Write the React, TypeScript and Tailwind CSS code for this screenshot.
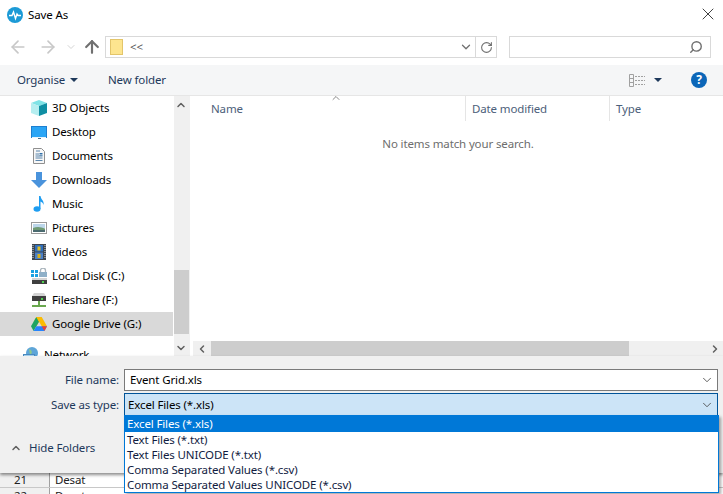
import type { ReactNode } from "react";
import { ArrowLeft, ArrowRight, ArrowUp, ChevronDown, ChevronLeft, ChevronRight, ChevronUp, RotateCw, Search, X } from "lucide-react";

const Cube = () => (
  <svg width="16" height="16" viewBox="0 0 16 16">
    <path d="M8 0 L16 3 L8 6 L0 3 Z" fill="#7fe3e6" />
    <path d="M0 3 L8 6 V16 L0 13 Z" fill="#b5eef0" />
    <path d="M16 3 L8 6 V16 L16 13 Z" fill="#0f8fa3" />
  </svg>
);

const Monitor = () => (
  <svg width="16" height="13" viewBox="0 0 16 13">
    <rect x="0" y="0" width="16" height="12" fill="#1d7fd0" />
    <rect x="1" y="1" width="14" height="10" fill="#2aa5f5" />
    <rect x="1" y="11" width="14" height="1" fill="#e8f4fc" />
    <rect x="7" y="12" width="3" height="1" fill="#4a6f8a" />
  </svg>
);

const DocIcon = () => (
  <svg width="12" height="16" viewBox="0 0 12 16">
    <path d="M.5.5 H8.5 L11.5 3.5 V15.5 H.5 Z" fill="#f7f7f7" stroke="#8f8f8f" />
    <path d="M3 3 H7 M2.5 6 H6 M2.5 8 H9.5 M2.5 10 H9.5 M2.5 12.5 H9.5" stroke="#5a86ad" strokeWidth="1" />
    <path d="M6.5 5.5 H9.5 M6.5 7 H9.5" stroke="#2f6fa8" />
  </svg>
);

const DownArrow = () => (
  <svg width="16" height="16" viewBox="0 0 16 16">
    <path d="M5 0 H11 V8 H16 L8 16 L0 8 H5 Z" fill="#4a93dc" />
  </svg>
);

const Note = () => (
  <svg width="12" height="16" viewBox="0 0 12 16">
    <ellipse cx="4" cy="13" rx="3.5" ry="2.7" fill="#1e9df1" />
    <path d="M6 0 H7.5 C8 4 11.5 4.5 10.5 9 C10 6.5 8.5 6 7.5 5.5 V13 H6 Z" fill="#1e9df1" />
  </svg>
);

const PictureIcon = () => (
  <svg width="16" height="12" viewBox="0 0 16 12">
    <rect x=".5" y=".5" width="15" height="11" fill="#fff" stroke="#9a9a9a" />
    <rect x="2" y="2" width="12" height="4" fill="#bcd6ea" />
    <path d="M2 6 C6 4.5 10 5 14 6.5 V8 H2 Z" fill="#6f9a74" />
    <rect x="2" y="8" width="12" height="2" fill="#4a6a6f" />
  </svg>
);

const Film = () => (
  <svg width="14" height="16" viewBox="0 0 14 16">
    <rect width="14" height="16" fill="#3d4650" />
    <rect x="3" y="1" width="8" height="6.5" fill="#2f6fc0" />
    <rect x="3" y="8.5" width="8" height="6.5" fill="#4a80c8" />
    <rect x="5.5" y="2.5" width="3" height="4" fill="#e0c020" />
    <rect x="5.5" y="10" width="3" height="4" fill="#d8b018" />
    <path d="M1 1 V15 M13 1 V15" stroke="#d8d8d8" strokeDasharray="1 1" />
  </svg>
);

const LocalDisk = () => (
  <svg width="16" height="16" viewBox="0 0 16 16">
    <rect x="0" y="2" width="3" height="3" fill="#1ba1e2" />
    <rect x="4" y="2" width="3" height="3" fill="#1ba1e2" />
    <rect x="0" y="6" width="3" height="3" fill="#1ba1e2" />
    <rect x="4" y="6" width="3" height="3" fill="#1ba1e2" />
    <path d="M9.5 4 V2.5 A2.5 2.5 0 0 1 14.5 2.5 V4" fill="none" stroke="#a9b4bc" strokeWidth="1.3" />
    <rect x="8" y="4" width="8" height="5" fill="#8fb0c8" />
    <rect x="1" y="10" width="15" height="2" fill="#d5d5d5" />
    <rect x="1" y="12" width="15" height="4" fill="#3f3f3f" />
    <rect x="11" y="13" width="2" height="2" fill="#4fd04f" />
  </svg>
);

const Share = () => (
  <svg width="16" height="16" viewBox="0 0 16 16">
    <path d="M3 1 H13 L15 4 H1 Z" fill="#d4d4d4" />
    <rect x="1" y="4" width="14" height="5" fill="#3f3f3f" />
    <rect x="10" y="6" width="2" height="2" fill="#4fd04f" />
    <rect x="7" y="9" width="2" height="4" fill="#6aa84f" />
    <rect x="1" y="13" width="14" height="2" fill="#6aa84f" />
  </svg>
);

const Drive = () => (
  <svg width="16" height="14" viewBox="0 0 16 14">
    <path d="M5.3 0 H10.7 L8 4.7 L5.3 9.3 L2.7 4.7 Z" fill="#f4c20d" />
    <path d="M5.3 0 L0 9.3 L2.6 14 L8 4.7 Z" fill="#1fa463" />
    <path d="M10.7 0 L16 9.3 H10.7 L5.4 0 Z" fill="#fbbc04" />
    <path d="M16 9.3 L13.4 14 H2.6 L5.3 9.3 Z" fill="#2684fc" />
    <path d="M16 9.3 H10.7 L13.4 14 Z" fill="#ea4335" />
  </svg>
);

const Globe = () => (
  <svg width="16" height="16" viewBox="0 0 16 16">
    <circle cx="9" cy="6" r="6" fill="#5ea5d8" />
    <path d="M6 2 C9 3 10 6 7 8 Z" fill="#8fc98a" />
    <rect x="0" y="7" width="12" height="7" fill="#4a8ac0" />
    <rect x="1" y="8" width="10" height="5" fill="#a5d3f0" />
  </svg>
);

const places: { name: string; icon: ReactNode; selected?: boolean }[] = [
  { name: "3D Objects", icon: <Cube /> },
  { name: "Desktop", icon: <Monitor /> },
  { name: "Documents", icon: <DocIcon /> },
  { name: "Downloads", icon: <DownArrow /> },
  { name: "Music", icon: <Note /> },
  { name: "Pictures", icon: <PictureIcon /> },
  { name: "Videos", icon: <Film /> },
  { name: "Local Disk (C:)", icon: <LocalDisk /> },
  { name: "Fileshare (F:)", icon: <Share /> },
  { name: "Google Drive (G:)", icon: <Drive />, selected: true },
];

const fileTypes = [
  "Excel Files (*.xls)",
  "Text Files (*.txt)",
  "Text Files UNICODE (*.txt)",
  "Comma Separated Values (*.csv)",
  "Comma Separated Values UNICODE (*.csv)",
];

export default function App() {
  return (
    <div className="relative w-[723px] h-[494px] overflow-hidden bg-white flex flex-col text-[11.5px] tracking-[-0.13px] leading-none text-black font-['Noto_Sans',sans-serif]">
      {/* Title bar */}
      <div className="h-[30px] flex items-center pl-[7px] pr-[5px] shrink-0">
        <svg width="16" height="16" viewBox="0 0 16 16" className="mr-[5px]">
          <circle cx="8" cy="8" r="8" fill="#1c9ad6" />
          <path d="M2 8.5 H5 L6.5 5 L8.5 11.5 L10 7 L11 8.5 H14" fill="none" stroke="#fff" strokeWidth="1.4" />
        </svg>
        <span>Save As</span>
        <X size={20} strokeWidth={0.9} className="ml-auto -mt-[2px]" />
      </div>

      {/* Nav row */}
      <div className="h-[22px] mt-[6px] flex items-center shrink-0">
        <ArrowLeft size={20} strokeWidth={2} className="ml-[8px] text-[#c8c8c8]" />
        <ArrowRight size={20} strokeWidth={2} className="ml-[10px] text-[#c8c8c8]" />
        <ChevronDown size={12} strokeWidth={2} className="ml-[7px] text-[#d4d4d4]" />
        <ArrowUp size={20} strokeWidth={2.6} className="ml-[5px] text-[#707070]" />
        <div className="ml-[3px] w-[392px] h-[22px] border border-[#d9d9d9] flex items-center">
          <div className="ml-[4px] w-[13px] h-[16px] bg-[#fde58f] border border-[#e3c56a]" />
          <span className="ml-[7px] text-[#555]">&lt;&lt;</span>
          <ChevronDown size={14} strokeWidth={2.2} className="ml-auto mr-[2px] text-[#707070]" />
          <div className="w-[21px] h-full border-l border-[#d9d9d9] flex items-center justify-center">
            <RotateCw size={13} strokeWidth={2} className="text-[#707070]" />
          </div>
        </div>
        <div className="ml-[12px] w-[202px] h-[22px] border border-[#d9d9d9] flex items-center justify-end pr-[7px]">
          <Search size={14} strokeWidth={2.4} className="text-[#707070] -scale-x-100" />
        </div>
      </div>

      {/* Toolbar */}
      <div className="h-[31px] mt-[7px] bg-[#f5f6f7] border-b border-[#e6e6e6] flex items-center shrink-0 text-[#1e395b]">
        <span className="ml-[17px] w-[53px]">Organise</span>
        <span className="w-0 h-0 border-x-[4px] border-x-transparent border-t-[4px] border-t-[#1e395b]" />
        <span className="ml-[30px]">New folder</span>
        <svg width="16" height="13" viewBox="0 0 16 13" className="ml-auto">
          <path d="M.5.5 H4.5 V12.5 H.5 Z M.5 4.5 H4.5 M.5 8.5 H4.5" fill="none" stroke="#a0a0a0" />
          <path d="M6 2.5 H16 M6 6.5 H16 M6 10.5 H16" stroke="#a0a0a0" strokeDasharray="2 1" />
        </svg>
        <span className="ml-[9px] w-0 h-0 border-x-[4px] border-x-transparent border-t-[4px] border-t-[#1e395b]" />
        <span className="ml-[29px] mr-[16px] w-[16px] h-[16px] rounded-full bg-[#0b66b8] text-white text-[12px] font-bold flex items-center justify-center">?</span>
      </div>

      {/* Main */}
      <div className="h-[260px] flex shrink-0 overflow-hidden">
        <div className="w-[173px] mr-[1px] shrink-0 flex flex-col overflow-hidden">
          {places.map((p) => (
            <div key={p.name} className={`h-[24px] shrink-0 flex items-center ${p.selected ? "bg-[#d9d9d9]" : ""}`}>
              <div className="ml-[31px] w-[16px] flex justify-center">{p.icon}</div>
              <span className="ml-[5px]">{p.name}</span>
            </div>
          ))}
          <div className="h-[24px] mt-[7px] shrink-0 flex items-center">
            <div className="ml-[23px] w-[16px]"><Globe /></div>
            <span className="ml-[5px]">Network</span>
          </div>
        </div>
        <div className="w-[16px] shrink-0 bg-[#f0f0f0] flex flex-col">
          <ChevronUp size={12} strokeWidth={3} className="mt-[3px] ml-[1px] text-[#606060]" />
          <div className="mt-[159px] w-[15px] h-[64px] bg-[#cdcdcd]" />
          <ChevronDown size={12} strokeWidth={3} className="mt-[8px] ml-[1px] text-[#606060]" />
        </div>
        <div className="flex-1 flex flex-col ml-[3px] min-w-0">
          <div className="relative h-[25px] flex items-center text-[#4c607a] shrink-0">
            <ChevronUp size={12} strokeWidth={1.5} className="absolute left-[137px] top-[-4px] text-[#606060]" />
            <span className="ml-[18px] w-[254px]">Name</span>
            <div className="h-full border-l border-[#e5e5e5] w-[144px] pl-[6px] flex items-center">Date modified</div>
            <div className="h-full border-l border-[#e5e5e5] pl-[6px] flex items-center">Type</div>
          </div>
          <div className="flex-1 flex justify-center pt-[17px] text-[#6d6d6d]">
            <span>No items match your search.</span>
          </div>
          <div className="h-[15px] bg-[#f0f0f0] flex items-center shrink-0">
            <div className="w-[18px] flex justify-center"><ChevronLeft size={12} strokeWidth={3} className="text-[#606060]" /></div>
            <div className="w-[418px] h-full bg-[#cdcdcd]" />
            <ChevronRight size={12} strokeWidth={3} className="ml-auto mr-[2px] text-[#606060]" />
          </div>
        </div>
      </div>

      {/* Bottom form */}
      <div className="h-[117px] bg-[#f0f0f0] shrink-0 flex flex-col shadow-[0_2px_3px_rgba(0,0,0,0.45)] z-10">
        <div className="mt-[13px] h-[22px] flex items-center">
          <span className="w-[119px] text-right text-[#1e395b]">File name:</span>
          <div className="ml-[5px] w-[594px] h-full bg-white border border-[#7a7a7a] flex items-center pl-[5px]">
            <span>Event Grid.xls</span>
            <ChevronDown size={14} strokeWidth={1.4} className="ml-auto mr-[3px] text-[#404040]" />
          </div>
        </div>
        <div className="mt-[2px] h-[23px] flex items-center">
          <span className="w-[119px] text-right text-[#1e395b]">Save as type:</span>
          <div className="ml-[5px] w-[594px] h-full bg-[#cce4f7] border border-[#005499] flex items-center pl-[3px]">
            <span>Excel Files (*.xls)</span>
            <ChevronDown size={14} strokeWidth={1.4} className="ml-auto mr-[3px] text-[#404040]" />
          </div>
        </div>
        <div className="mt-[26px] flex items-center text-[#1e395b]">
          <ChevronUp size={12} strokeWidth={3} className="ml-[10px] text-[#606060]" />
          <span className="ml-[7px]">Hide Folders</span>
        </div>
      </div>

      {/* Window behind the dialog */}
      <div className="flex-1 bg-white text-[#222]">
        <div className="h-[15px] flex items-center border-b border-[#c8c8c8]">
          <span className="w-[50px] h-full bg-[#f0f0f0] border-r border-[#a0a0a0] flex items-center justify-center pr-[8px]">21</span>
          <span className="ml-[5px]">Desat</span>
        </div>
        <div className="h-[15px] flex items-center">
          <span className="w-[50px] h-full bg-[#f0f0f0] border-r border-[#a0a0a0] flex items-center justify-center pr-[8px]">22</span>
          <span className="ml-[5px]">Desat</span>
        </div>
      </div>

      {/* Open dropdown list */}
      <div className="absolute z-20 left-[124px] top-[415px] w-[595px] h-[78px] bg-white border border-[#0078d7] shadow-[2px_2px_3px_rgba(0,0,0,0.35)] flex flex-col">
        {fileTypes.map((t, i) => (
          <div key={t} className={`h-[15px] first:h-[16px] shrink-0 flex items-center pl-[2px] ${i === 0 ? "bg-[#0078d7] text-white" : "text-[#111c3f]"}`}>
            {t}
          </div>
        ))}
      </div>
    </div>
  );
}
